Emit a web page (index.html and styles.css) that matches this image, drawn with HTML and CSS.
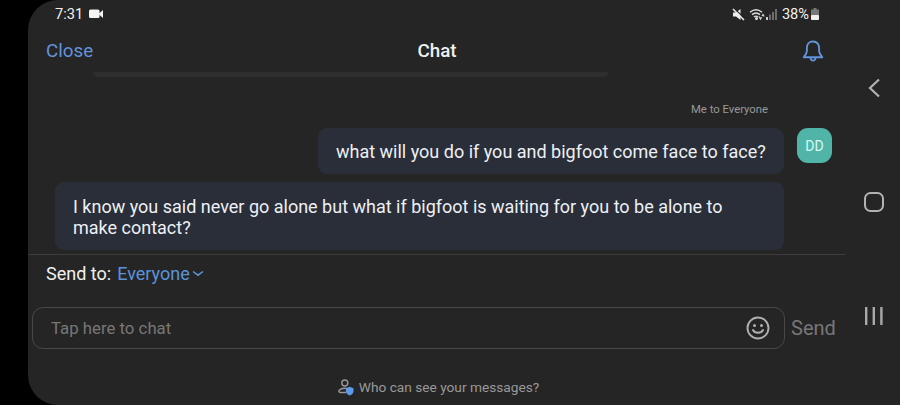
FILE: index.html
```
<!DOCTYPE html>
<html>
<head>
<meta charset="UTF-8">
<title>Chat</title>
<link rel="stylesheet" href="styles.css">
</head>
<body>
<div class="phone">
	<div class="app">
		<div class="status">
			<span class="time">7:31</span>
			<svg class="camera" width="15" height="10" viewBox="0 0 15 10" fill="#f4f4f4"><rect x="0" y="0.500" width="10.500" height="8.500" rx="1.500"/><path d="M10 4.500L14 1v8l-4-3.500z"/></svg>
			<div class="status-right">
				<svg width="13" height="13" viewBox="0 0 13 13"><path d="M1 4.500h3L8.500 1v11L4 8.500H1z" fill="#eee"/><path d="M2 0l11 11" stroke="#252525" stroke-width="1.200"/><path d="M1 1l11 11" stroke="#eee" stroke-width="1.500"/></svg>
				<svg class="wifi" width="16" height="13" viewBox="0 0 16 13" fill="none" stroke="#ddd" stroke-width="1.400"><path d="M1 4.200Q7 -.8 13 4.200M3 6.600Q7 3.200 11 6.600M5 8.900Q7 7.300 9 8.900"/><circle cx="7.500" cy="10.600" r=".8" fill="#ddd"/><path d="M10 8.500l1.500 2.500 1-2M13 8l1-1.500 1.200 2" stroke-width="1.200"/></svg>
				<svg class="signal" width="11" height="11" viewBox="0 0 11 11" fill="#6c6c6c"><rect x="0" y="8" width="2" height="3" fill="#ccc"/><rect x="3" y="5.500" width="2" height="5.500"/><rect x="6" y="3" width="2" height="8"/><rect x="9" y="0" width="2" height="11"/></svg>
				<span class="percent">38%</span>
				<svg class="battery" width="8" height="12" viewBox="0 0 8 12"><path d="M2.500 0h3v1.500H8V8H0V1.500h2.500z" fill="#777"/><rect y="7" width="8" height="5" rx="1" fill="#f0f0f0"/></svg>
			</div>
		</div>
		<div class="header">
			<span class="close">Close</span>
			<span class="title">Chat</span>
			<svg class="bell" width="22" height="24" viewBox="0 0 22 24" fill="none" stroke="#6293db" stroke-width="1.900" stroke-linejoin="round"><path d="M11 2.500C7 2.500 4.900 5.300 4.900 8.800V12c0 2.500-1.400 4-3.200 6.300h18.600C18.500 16 17.100 14.500 17.100 12V8.800C17.100 5.300 15 2.500 11 2.500z"/><path d="M8.500 19c.3 3.500 4.700 3.500 5 0"/></svg>
		</div>
		<div class="messages">
			<div class="old"></div>
			<div class="sender">Me to Everyone</div>
			<div class="row">
				<div class="bubble one">what will you do if you and bigfoot come face to face?</div>
				<div class="avatar">DD</div>
			</div>
			<div class="bubble two">I know you said never go alone but what if bigfoot is waiting for you to be alone to<br>make contact?</div>
		</div>
		<div class="sendto">
			<span>Send to:</span>
			<span class="everyone">Everyone</span>
			<svg width="12" height="8" viewBox="0 0 12 8" fill="none" stroke="#5b93da" stroke-width="1.500"><path d="M1 1.500l5 3.700 5-3.700"/></svg>
		</div>
		<div class="compose">
			<div class="field">
				<span class="hint">Tap here to chat</span>
				<svg width="24" height="24" viewBox="0 0 24 24" fill="none" stroke="#b0b0b0" stroke-width="1.900"><circle cx="12" cy="12" r="10.500"/><path d="M7 14c1.800 3.600 8.200 3.600 10 0" stroke-linecap="round"/><circle cx="8.500" cy="9.500" r="1.500" fill="#b0b0b0" stroke="none"/><circle cx="15.500" cy="9.500" r="1.500" fill="#b0b0b0" stroke="none"/></svg>
			</div>
			<span class="send">Send</span>
		</div>
		<div class="privacy">
			<svg width="17" height="17" viewBox="0 0 17 17" fill="none" stroke="#999" stroke-width="1.400"><circle cx="6.800" cy="4" r="3"/><path d="M8 13.500H2.500C.5 13.500 .6 12 1.500 11 3 9.400 6 9 9 9.500"/><path d="M11.700 7.800l3.800 1.400v3c0 2-1.500 3.200-3.800 4.200-2.300-1-3.800-2.200-3.800-4.200v-3z" fill="#5c9bea" stroke="none"/></svg>
			<span>Who can see your messages?</span>
		</div>
	</div>
	<div class="nav">
		<svg width="14" height="20" viewBox="0 0 14 20" fill="none" stroke="#b2b2b2" stroke-width="2.200"><path d="M12 1.500L3 10l9 8.500"/></svg>
		<svg width="20" height="20" viewBox="0 0 20 20" fill="none" stroke="#b2b2b2" stroke-width="2"><rect x="1" y="1" width="18" height="18" rx="5.500"/></svg>
		<svg width="20" height="20" viewBox="0 0 20 20" fill="#a9a9a9"><rect x="1" y="1" width="2.400" height="18"/><rect x="8.600" y="1" width="2.400" height="18"/><rect x="16.200" y="1" width="2.400" height="18"/></svg>
	</div>
</div>
</body>
</html>
```
FILE: styles.css
```
body {
	margin: 0;
	background: #000;
	font-family: Roboto, sans-serif;
	color: #f0f0f0;
}
svg {
	display: block;
	flex: none;
}
.phone {
	display: flex;
	height: 405px;
	margin-left: 28px;
	overflow: hidden;
	background: #252525;
	border-radius: 30px 0 0 30px;
}
.app {
	display: flex;
	flex: none;
	flex-direction: column;
	width: 818px;
	white-space: nowrap;
}
.status {
	display: flex;
	align-items: center;
	height: 28px;
	padding: 0 27px 0 27px;
	font-size: 14.6px;
}
.camera {
	margin-left: 6px;
}
.status-right {
	display: flex;
	align-items: center;
	margin-left: auto;
}
.wifi {
	margin-left: 4px;
}
.signal {
	margin-left: 1px;
}
.percent {
	margin-left: 5px;
}
.battery {
	margin-left: 2px;
}
.header {
	display: grid;
	grid-template-columns: 1fr auto 1fr;
	align-items: center;
	height: 43px;
	padding: 1px 18px 0 18px;
	font-size: 18.8px;
}
.close {
	color: #6293db;
}
.title {
	font-weight: 500;
}
.bell {
	justify-self: end;
	margin-right: 4px;
}
.messages {
	height: 182px;
	overflow: hidden;
	border-bottom: 1px solid #3c3c3c;
}
.old {
	width: 515px;
	height: 5px;
	margin-left: 65px;
	background: #2e2e2e;
	border-radius: 0 0 12px 12px;
}
.sender {
	margin: 26px 78px 0 0;
	text-align: right;
	font-size: 11.3px;
	line-height: 14px;
	color: #999;
}
.row {
	display: flex;
	justify-content: flex-end;
	gap: 13px;
	margin: 11px 14px 8px 0;
}
.bubble {
	box-sizing: border-box;
	padding: 13px 18px;
	font-size: 18px;
	line-height: 21px;
	color: #eef0f5;
	background: #292e39;
	border-radius: 9px;
}
.one {
	width: 466px;
	height: 46px;
}
.two {
	width: 729px;
	height: 68px;
	margin-left: 27px;
	padding-top: 14px;
}
.avatar {
	width: 35px;
	height: 35px;
	border-radius: 11px;
	background: #50b5a8;
	color: #d9f7f1;
	font-size: 14px;
	line-height: 36px;
	text-align: center;
}
.sendto {
	display: flex;
	align-items: center;
	height: 37px;
	padding-left: 18px;
	font-size: 18px;
}
.everyone {
	margin: 0 2px 0 6px;
	color: #5b93da;
}
.compose {
	display: flex;
	align-items: center;
	height: 42px;
	margin: 15px 0 0 4px;
}
.field {
	box-sizing: border-box;
	display: flex;
	align-items: center;
	justify-content: space-between;
	width: 753px;
	height: 42px;
	padding: 0 14px 0 18px;
	border: 1px solid #484848;
	border-radius: 11px;
}
.hint {
	font-size: 16.8px;
	color: #777;
}
.send {
	margin-left: 6px;
	font-size: 20px;
	color: #777;
}
.privacy {
	display: flex;
	align-items: center;
	justify-content: center;
	gap: 4px;
	height: 20px;
	margin-top: 28px;
	padding-left: 3px;
	font-size: 13.7px;
	color: #999;
}
.nav {
	display: flex;
	flex-direction: column;
	align-items: center;
	gap: 94px;
	width: 53px;
	padding: 78px 0 0 1px;
}
```
